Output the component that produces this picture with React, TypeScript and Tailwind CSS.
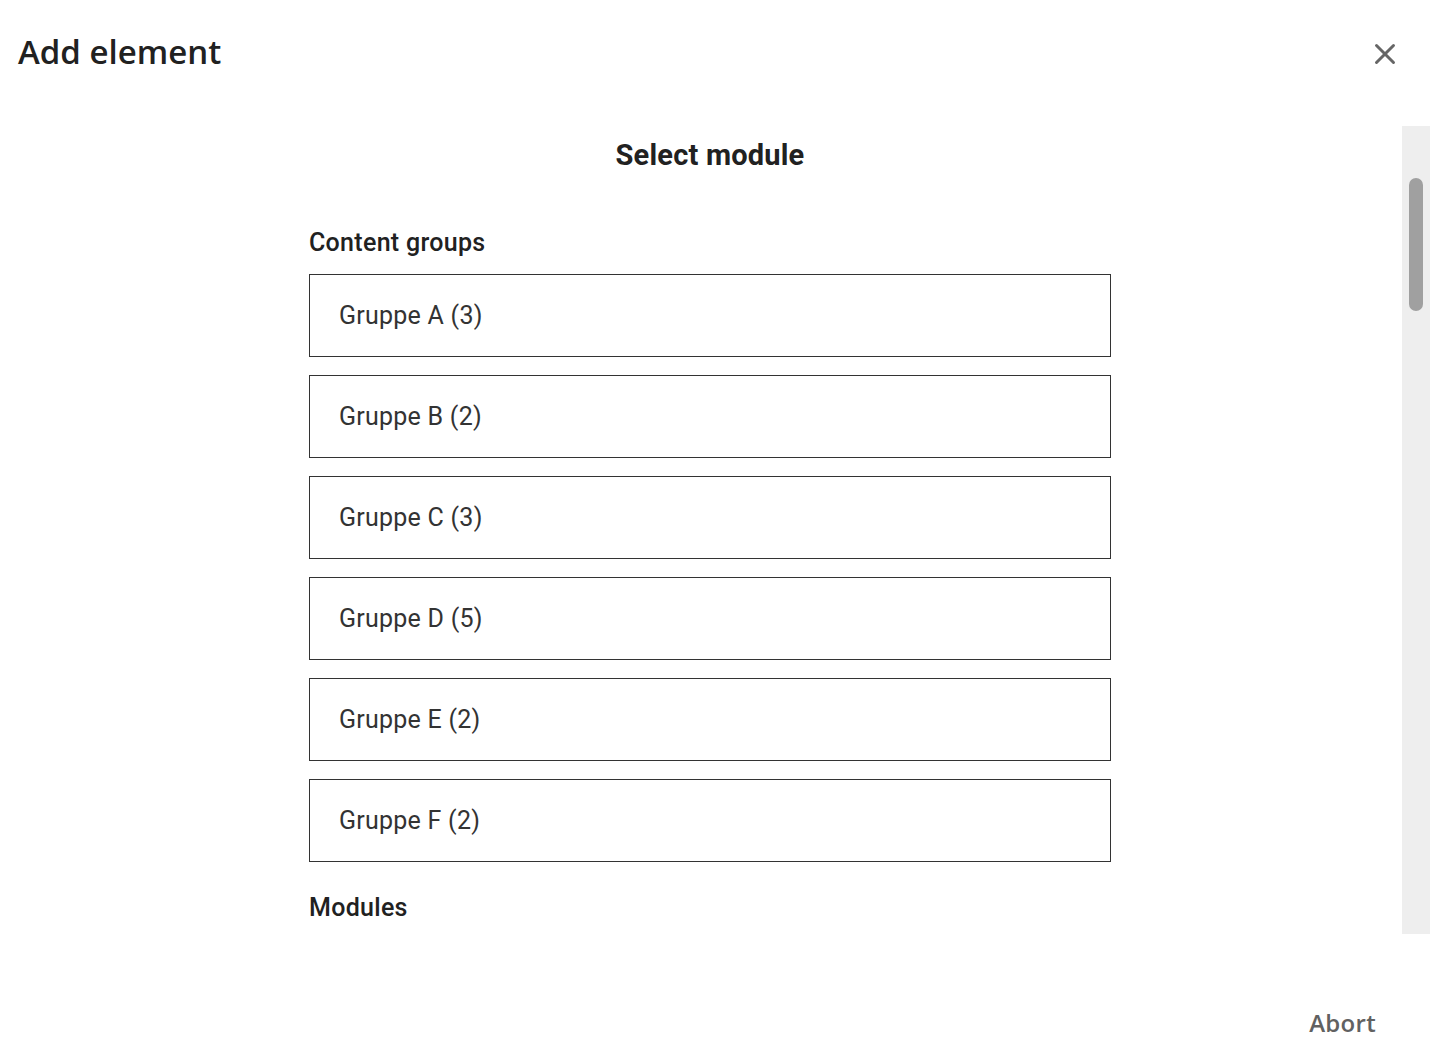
import { X } from "lucide-react";

const GROUPS = ["Gruppe A (3)", "Gruppe B (2)", "Gruppe C (3)", "Gruppe D (5)", "Gruppe E (2)", "Gruppe F (2)"];

export default function App() {
  return (
    <div className="w-[1446px] h-[1060px] bg-white flex flex-col overflow-hidden">
      {/* Header */}
      <div className="h-[126px] flex items-start justify-between pl-[18px] pr-[44px] pt-[30px]">
        <h1 className="text-[33px] leading-[44px] font-semibold text-[#212121] font-['Open_Sans',sans-serif]">Add element</h1>
        <button className="mt-[7px] text-[#666666]">
          <X size={34} strokeWidth={2.1} />
        </button>
      </div>

      {/* Body */}
      <div className="flex h-[808px] pl-[18px] pr-[16px]">
        <div className="flex-1 overflow-hidden font-['Roboto',sans-serif]">
          <div className="w-[802px] mx-auto pt-[11px]">
            <h2 className="text-center text-[29px] leading-[36px] font-bold tracking-[0.2px] text-[#212121]">Select module</h2>
            <h3 className="mt-[55px] text-[25px] leading-[30px] font-medium tracking-[0.3px] text-[#212121]">Content groups</h3>
            <div className="mt-[16px] flex flex-col gap-[18px]">
              {GROUPS.map((g) => (
                <div key={g} className="h-[83px] border border-[#333333] flex items-center px-[29px] text-[25px] tracking-[0.25px] text-[#333333]">
                  {g}
                </div>
              ))}
            </div>
            <h3 className="mt-[31px] text-[25px] leading-[30px] font-medium tracking-[0.3px] text-[#212121]">Modules</h3>
          </div>
        </div>
        {/* Scrollbar */}
        <div className="w-[28px] bg-[#eeeeee] flex justify-center pt-[52px]">
          <div className="w-[14px] h-[133px] rounded-full bg-[#a0a0a0]" />
        </div>
      </div>

      {/* Footer */}
      <div className="flex-1 flex items-start justify-end pr-[70px] pt-[74px]">
        <button className="text-[24px] leading-[30px] font-semibold text-[#616161] font-['Open_Sans',sans-serif] tracking-[0.3px]">Abort</button>
      </div>
    </div>
  );
}
